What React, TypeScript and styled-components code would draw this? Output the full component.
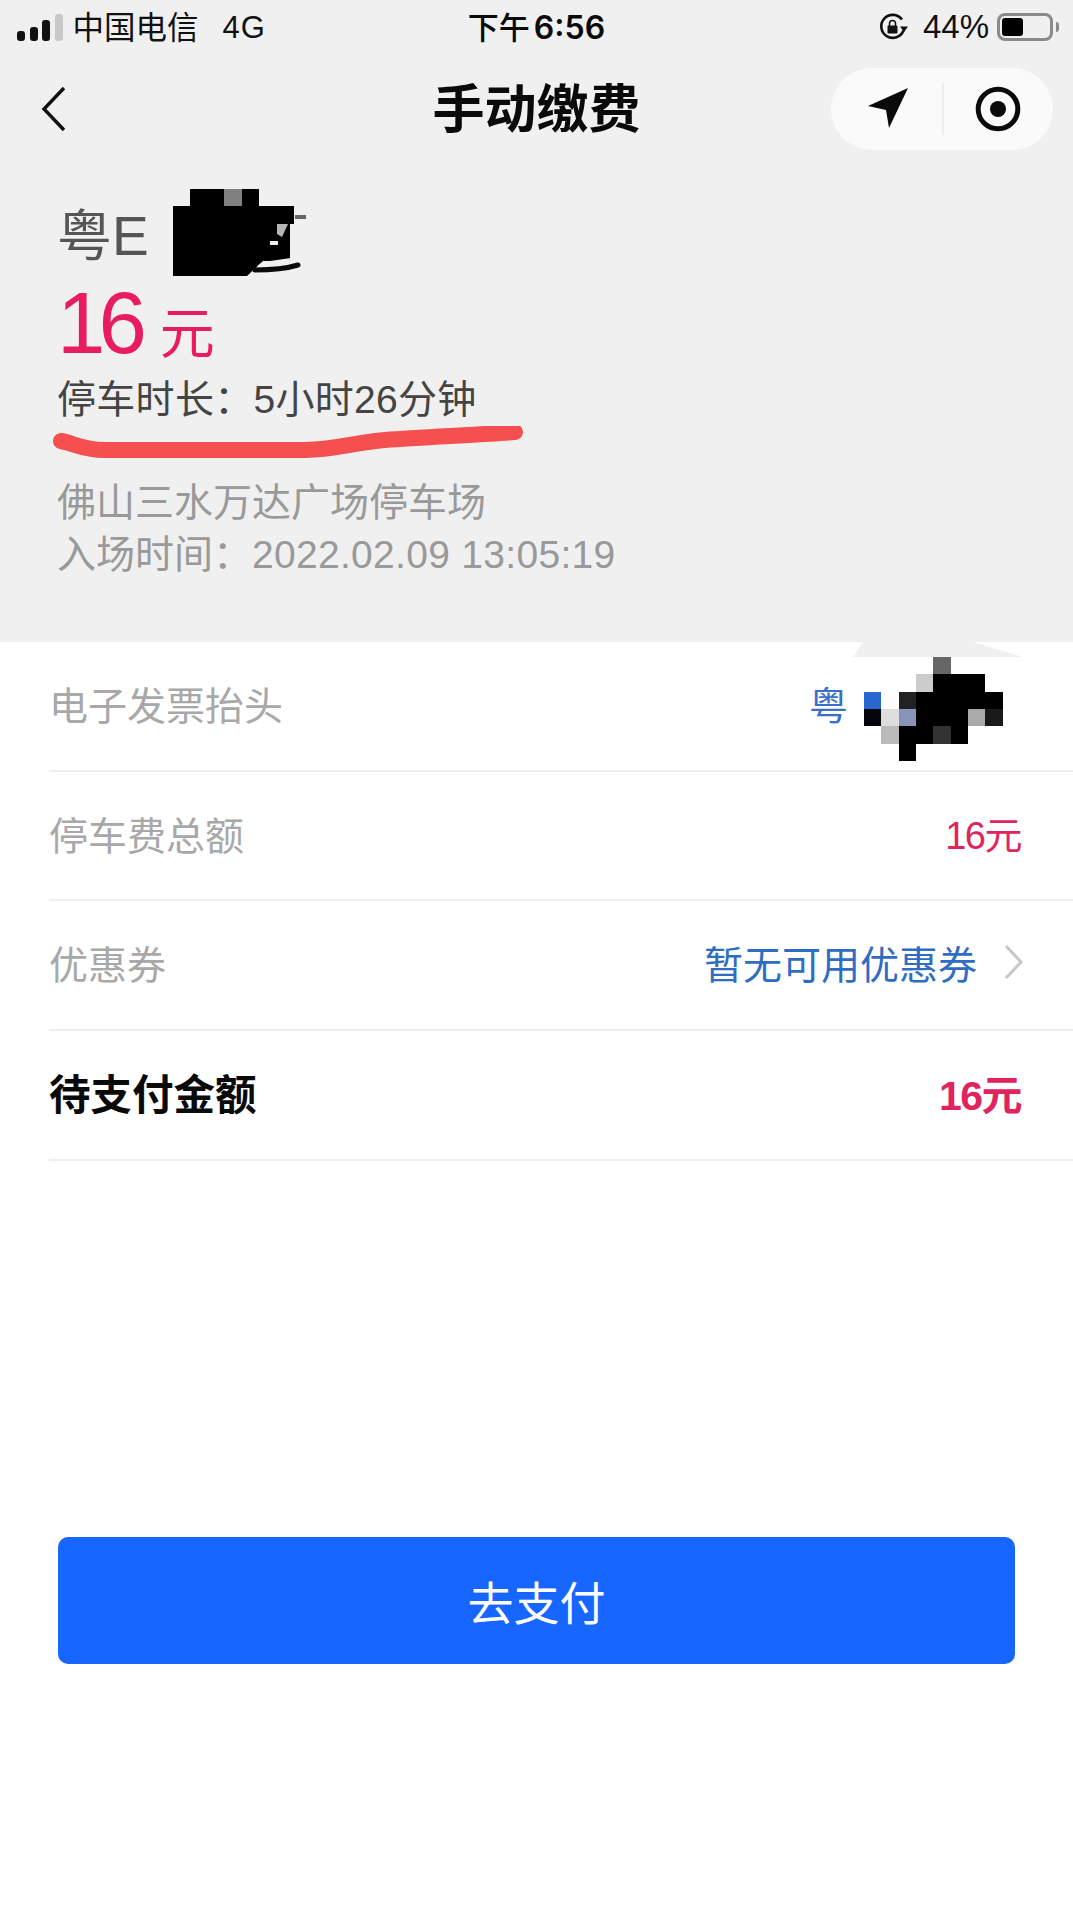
import React from 'react'
import styled, { createGlobalStyle } from 'styled-components'

const GlobalStyle = createGlobalStyle`
  html, body {
    margin: 0;
    padding: 0;
    background: #fff;
  }
  body {
    font-family: "Liberation Sans", "Noto Sans CJK SC", sans-serif;
  }
`

const signalBars = [
  { height: 10, color: '#111' },
  { height: 14, color: '#111' },
  { height: 21, color: '#111' },
  { height: 27, color: '#c8c8c8' },
]

// mosaic over the invoice title: col, row, span, colour
const mosaicCells: [number, number, number, string][] = [
  [4, 0, 1, '#666'],
  [3, 1, 1, '#ccc'],
  [4, 1, 3, '#000'],
  [0, 2, 1, '#2a66d0'],
  [2, 2, 1, '#222'],
  [3, 2, 5, '#000'],
  [0, 3, 1, '#05060c'],
  [1, 3, 1, '#ddd'],
  [2, 3, 1, '#8893b5'],
  [3, 3, 3, '#000'],
  [6, 3, 1, '#aaa'],
  [7, 3, 1, '#1a1a1a'],
  [1, 4, 1, '#bbb'],
  [2, 4, 2, '#000'],
  [4, 4, 1, '#333'],
  [5, 4, 1, '#000'],
  [2, 5, 1, '#000'],
]

const App: React.FC = () => {
  return (
    <Page>
      <GlobalStyle />
      <Header>
        <StatusBar>
          <StatusLeft>
            <Signal>
              {signalBars.map((bar, i) => (
                <SignalBar key={i} $height={bar.height} $color={bar.color} />
              ))}
            </Signal>
            <Carrier>中国电信</Carrier>
            <Network>4G</Network>
          </StatusLeft>
          <Clock>
            下午<ClockDigits>6:56</ClockDigits>
          </Clock>
          <StatusRight>
            <svg width="30" height="28" viewBox="0 0 30 28">
              <path d="M24.5 17.5A11.5 11.5 0 1 1 23 6.5" fill="none" stroke="#111" strokeWidth="2.6" />
              <path d="M21 13.5h8l-4 5.5z" fill="#111" />
              <rect x="8.5" y="12.5" width="10" height="8" rx="1" fill="#111" />
              <path d="M10.5 13v-2.5a3 3 0 0 1 6 0V13" fill="none" stroke="#111" strokeWidth="1.6" />
            </svg>
            <BatteryText>44%</BatteryText>
            <Battery>
              <BatteryFill />
            </Battery>
            <BatteryNub />
          </StatusRight>
        </StatusBar>

        <NavBar>
          <BackIcon width="28" height="48" viewBox="0 0 28 48">
            <path d="M24 3 4 24l20 21" fill="none" stroke="#111" strokeWidth="3.4" />
          </BackIcon>
          <Title>手动缴费</Title>
          <Capsule>
            <CapsuleButton>
              <svg width="44" height="44" viewBox="0 0 44 44">
                <path d="M42 1 2 19l18 4 3 18z" fill="#0a0a0a" />
              </svg>
            </CapsuleButton>
            <CapsuleDivider />
            <CapsuleButton>
              <svg width="46" height="46" viewBox="0 0 46 46">
                <circle cx="23" cy="23" r="19.8" fill="none" stroke="#0a0a0a" strokeWidth="5" />
                <circle cx="23" cy="23" r="8" fill="#0a0a0a" />
              </svg>
            </CapsuleButton>
          </Capsule>
        </NavBar>

        <Info>
          <Plate>
            粤E
            <PlateMask width="134" height="90" viewBox="0 0 134 90">
              <path d="M17 0h69v17h35v18h-4v37H90L74 87H0V17h17z" fill="#000" />
              <rect x="51" y="0" width="18" height="17" fill="#808080" />
              <path d="M122 26h11v4h-11z" fill="#666" />
              <path d="M104 35h11l-6 13-5-3z" fill="#b5b5b5" />
              <path d="M97 52h8v4h-8z" fill="#eee" />
              <path d="M90 73l28-4 4 2-38 6z" fill="#f0f0f1" />
              <path d="M82 81c14 0 30-1 43-5" fill="none" stroke="#0a0a0a" strokeWidth="5" strokeLinecap="round" />
            </PlateMask>
          </Plate>
          <Amount>
            <AmountDigits>16</AmountDigits>
            <AmountUnit>元</AmountUnit>
          </Amount>
          <Duration>停车时长：5小时26分钟</Duration>
          <Underline width="470" height="32" viewBox="0 0 470 32">
            <path
              d="M8 15c12 2 22 9 44 9h200c30 0 46-7 80-10 40-3 90-5 130-8"
              fill="none"
              stroke="#f5504f"
              strokeWidth="16"
              strokeLinecap="round"
            />
          </Underline>
          <VenueBlock>
            <Venue>佛山三水万达广场停车场</Venue>
            <Venue>
              入场时间：<VenueTime>2022.02.09 13:05:19</VenueTime>
            </Venue>
          </VenueBlock>
        </Info>
      </Header>

      <MaskOverlay width="220" height="125" viewBox="0 0 220 125">
        <path d="M10 0h110l50 15H0z" fill="#f0f0f1" />
        {mosaicCells.map(([col, row, span, color], i) => (
          <rect
            key={i}
            x={11 + col * 17.33}
            y={15 + row * 17.3}
            width={span * 17.34}
            height={17.4}
            fill={color}
            shapeRendering="crispEdges"
          />
        ))}
      </MaskOverlay>

      <List>
        <Row>
          <RowLabel>电子发票抬头</RowLabel>
          <InvoiceValue>粤</InvoiceValue>
        </Row>
        <Row>
          <RowLabel>停车费总额</RowLabel>
          <MoneyValue>16元</MoneyValue>
        </Row>
        <Row>
          <RowLabel>优惠券</RowLabel>
          <CouponValue>
            暂无可用优惠券
            <svg width="22" height="36" viewBox="0 0 22 36">
              <path d="M3 2l15 16L3 34" fill="none" stroke="#c8c8c8" strokeWidth="3" />
            </svg>
          </CouponValue>
        </Row>
        <Row>
          <TotalLabel>待支付金额</TotalLabel>
          <TotalValue>16元</TotalValue>
        </Row>
      </List>

      <PayButton>去支付</PayButton>
    </Page>
  )
}

const Page = styled.div`
  position: relative;
  width: 1073px;
  height: 1908px;
  overflow: hidden;
  background: #fff;
`

const Header = styled.div`
  height: 642px;
  background: #f0f0f1;
`

const StatusBar = styled.div`
  display: grid;
  grid-template-columns: 1fr auto 1fr;
  align-items: center;
  height: 54px;
  padding: 0 14px 0 17px;
  color: #111;
  font-size: 31px;
`

const StatusLeft = styled.div`
  display: flex;
  align-items: center;
`

const Signal = styled.div`
  display: flex;
  align-items: flex-end;
  gap: 4.5px;
  height: 27px;
`

const SignalBar = styled.div<{ $height: number; $color: string }>`
  width: 8px;
  height: ${(props) => props.$height}px;
  border-radius: 3px;
  background: ${(props) => props.$color};
`

const Carrier = styled.span`
  margin-left: 10px;
  padding-bottom: 4px;
  font-size: 31.5px;
`

const Network = styled.span`
  margin-left: 24px;
  padding-top: 2px;
  letter-spacing: 1px;
`

const Clock = styled.div`
  margin-right: 3px;
  padding-bottom: 4px;
  font-weight: 500;
  color: #0a0a0a;
`

const ClockDigits = styled.span`
  margin-left: 4px;
  font-family: Inter, "Liberation Sans", sans-serif;
  font-weight: 600;
  font-size: 32px;
`

const StatusRight = styled.div`
  display: flex;
  align-items: center;
  justify-content: flex-end;
`

const BatteryText = styled.span`
  margin: 0 8px 0 14px;
  font-size: 33px;
`

const Battery = styled.div`
  box-sizing: border-box;
  width: 56px;
  height: 28px;
  padding: 2px;
  border: 3px solid #8a8a8a;
  border-radius: 8px;
`

const BatteryFill = styled.div`
  width: 21px;
  height: 100%;
  border-radius: 3px;
  background: #000;
`

const BatteryNub = styled.div`
  width: 3px;
  height: 10px;
  margin-left: 3px;
  border-radius: 0 3px 3px 0;
  background: #8a8a8a;
`

const NavBar = styled.div`
  display: grid;
  grid-template-columns: 1fr auto 1fr;
  align-items: center;
  height: 82px;
  margin-top: 14px;
  padding: 0 20px;
`

const BackIcon = styled.svg`
  display: block;
  margin-left: 20px;
`

const Title = styled.h1`
  margin: 0;
  padding-top: 2px;
  color: #0a0a0a;
  font-size: 52px;
  font-weight: 700;
  line-height: 80px;
`

const Capsule = styled.div`
  display: flex;
  align-items: center;
  justify-self: end;
  box-sizing: border-box;
  width: 222px;
  height: 82px;
  padding: 0 32px 0 35px;
  justify-content: space-between;
  border-radius: 41px;
  background: #fafafa;
`

const CapsuleButton = styled.div`
  display: flex;
  align-items: center;
  justify-content: center;
`

const CapsuleDivider = styled.div`
  width: 2px;
  height: 52px;
  background: #eeeeee;
`

const Info = styled.div`
  padding: 56px 0 0 57px;
`

const Plate = styled.div`
  position: relative;
  color: #555;
  font-size: 55px;
  line-height: 60px;
`

const PlateMask = styled.svg`
  position: absolute;
  left: 116px;
  top: -17px;
`

const Amount = styled.div`
  height: 90px;
  margin-top: 12px;
  color: #e91c5f;
  font-size: 87px;
  line-height: 90px;
`

const AmountDigits = styled.span`
  letter-spacing: -7px;
`

const AmountUnit = styled.span`
  margin-left: 20px;
  font-size: 55px;
`

const Duration = styled.div`
  height: 46px;
  margin-top: 9px;
  color: #444;
  font-size: 39px;
  letter-spacing: 0.3px;
  line-height: 46px;
`

const Underline = styled.svg`
  display: block;
  margin: 3px 0 0 -4px;
`

const VenueBlock = styled.div`
  margin-top: 19px;
`

const Venue = styled.div`
  height: 52px;
  color: #999;
  font-size: 39px;
  line-height: 52px;
`

const VenueTime = styled.span`
  letter-spacing: 0.3px;
`

const MaskOverlay = styled.svg`
  position: absolute;
  left: 853px;
  top: 642px;
`

const List = styled.div`
  margin-left: 49px;
`

const Row = styled.div`
  display: flex;
  align-items: center;
  justify-content: space-between;
  box-sizing: border-box;
  height: 129.7px;
  padding: 0 52px 6px 0;
  border-bottom: 2px solid #eee;
  font-size: 39px;
`

const RowLabel = styled.span`
  color: #a8a8a8;
`

const InvoiceValue = styled.span`
  margin-right: 173px;
  color: #3a70c8;
`

const MoneyValue = styled.span`
  color: #e0245e;
  font-size: 38px;
  letter-spacing: -1.5px;
`

const CouponValue = styled.span`
  display: flex;
  align-items: center;
  gap: 26px;
  margin-right: -4px;
  color: #2f6cc4;
`

const TotalLabel = styled.span`
  color: #0a0a0a;
  font-size: 41.5px;
  font-weight: 700;
`

const TotalValue = styled.span`
  color: #e0245e;
  font-size: 41px;
  font-weight: 700;
  letter-spacing: -1.5px;
`

const PayButton = styled.button`
  display: block;
  width: 957px;
  height: 127px;
  margin: 376px 0 0 58px;
  padding: 0;
  border: 0;
  border-radius: 10px;
  background: #1766ff;
  color: #fff;
  font-family: inherit;
  font-size: 46px;
`

export default App
